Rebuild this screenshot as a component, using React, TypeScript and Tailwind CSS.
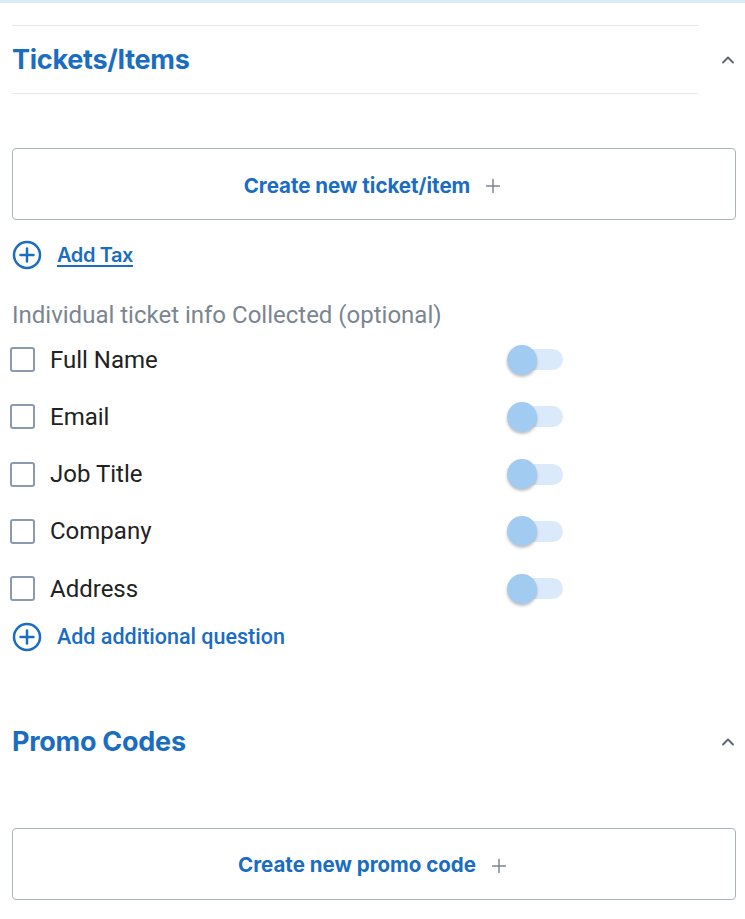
import { ChevronUp, Plus } from "lucide-react";

const fields = ["Full Name", "Email", "Job Title", "Company", "Address"];

function CirclePlus() {
  return (
    <svg width="30" height="30" viewBox="0 0 30 30" fill="none" className="shrink-0">
      <circle cx="15" cy="15" r="13" stroke="#1a6dc0" strokeWidth="2.5" />
      <path d="M15 8.5v13M8.5 15h13" stroke="#1a6dc0" strokeWidth="2.5" strokeLinecap="round" />
    </svg>
  );
}

function Toggle() {
  return (
    <div className="relative w-[56px] h-[30px] flex items-center">
      <div className="ml-[4px] w-[52px] h-[21px] rounded-full bg-[#dbeafa]" />
      <div className="absolute left-0 top-0 w-[30px] h-[30px] rounded-full bg-[#a2cbf2] shadow-[0_2px_3px_rgba(0,0,0,0.25)]" />
    </div>
  );
}

function CreateButton({ label }: { label: string }) {
  return (
    <button className="w-full h-[72px] border border-[#a9b4c2] rounded-[4px] flex items-center justify-center gap-[12px] bg-white pt-[4px]">
      <span className="text-[20.5px] font-bold text-[#1a6dc0]" style={{ fontFamily: "Inter, sans-serif" }}>
        {label}
      </span>
      <Plus size={22} strokeWidth={1.6} color="#7a8593" />
    </button>
  );
}

export default function App() {
  return (
    <div className="min-h-screen bg-white" style={{ fontFamily: "Roboto, sans-serif" }}>
      <div className="h-[3px] bg-[#dbeafb]" />
      <div className="pl-[12px] pr-[9px]">
        {/* Tickets header */}
        <div className="flex items-center mt-[22px]">
          <div className="flex-1 mr-[20px]">
            <div className="h-px bg-[#e4e8ee]" />
            <div className="h-[67px] flex items-center">
              <h2 className="text-[27px] leading-[36px] font-bold text-[#1a6dc0] tracking-[-0.01em]" style={{ fontFamily: "Inter, sans-serif" }}>
                Tickets/Items
              </h2>
            </div>
            <div className="h-px bg-[#e4e8ee]" />
          </div>
          <ChevronUp size={20} strokeWidth={2.2} color="#5b6470" className="mr-[-2px]" />
        </div>

        <div className="mt-[54px]">
          <CreateButton label="Create new ticket/item" />
        </div>

        <div className="flex items-center gap-[15px] mt-[20px]">
          <CirclePlus />
          <a className="text-[20px] font-semibold text-[#1a6dc0] underline underline-offset-[3px] tracking-[-0.02em]" style={{ fontFamily: "Inter, sans-serif" }}>
            Add Tax
          </a>
        </div>

        <p className="mt-[33px] text-[24px] text-[#7b8591] leading-none">Individual ticket info Collected (optional)</p>

        <div className="mt-[4px] flex flex-col -ml-[2px]">
          {fields.map((f) => (
            <div key={f} className="h-[57.25px] flex items-center">
              <div className="w-[25px] h-[25px] border-2 border-[#8a9ab0] rounded-[3px] shrink-0" />
              <span className="ml-[15px] text-[24px] text-[#222] w-[457px]">{f}</span>
              <Toggle />
            </div>
          ))}
        </div>

        <div className="flex items-center gap-[15px] mt-[4px]">
          <CirclePlus />
          <span className="text-[21.5px] font-medium text-[#1a6dc0]">Add additional question</span>
        </div>

        {/* Promo codes header */}
        <div className="flex items-center justify-between mt-[70px]">
          <h2 className="text-[27px] leading-[36px] font-bold text-[#1a6dc0] tracking-[-0.01em]" style={{ fontFamily: "Inter, sans-serif" }}>
            Promo Codes
          </h2>
          <ChevronUp size={20} strokeWidth={2.2} color="#5b6470" className="mr-[-2px]" />
        </div>

        <div className="mt-[68px]">
          <CreateButton label="Create new promo code" />
        </div>
      </div>
    </div>
  );
}
